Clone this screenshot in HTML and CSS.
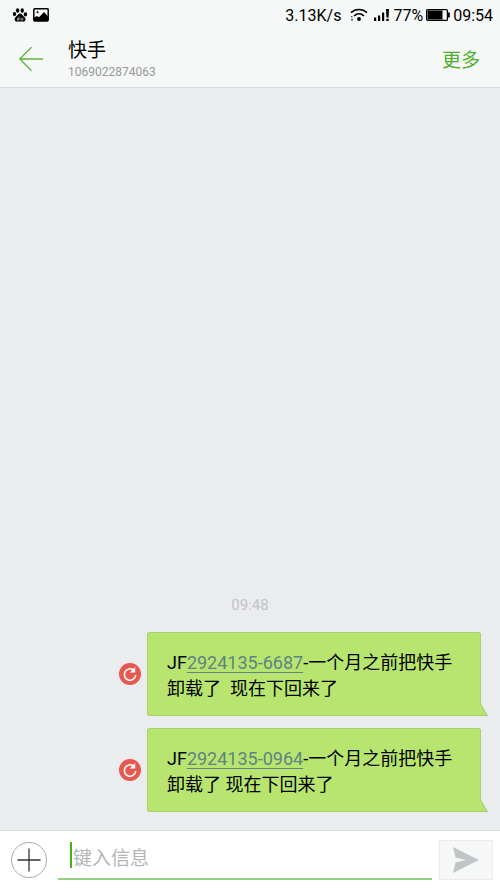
FILE: index.html
```html
<!DOCTYPE html>
<html lang="zh-CN">
<head>
<meta charset="utf-8">
<meta name="viewport" content="width=device-width, initial-scale=1">
<title>快手</title>
<link rel="stylesheet" href="styles.css">
</head>
<body>
<div class="status">
  <div class="status-left">
    <svg width="16" height="14" viewBox="0 0 16 14" aria-hidden="true">
      <ellipse cx="5.6" cy="2.5" rx="1.7" ry="2.3"/>
      <ellipse cx="10.2" cy="2.6" rx="1.7" ry="2.3"/>
      <ellipse cx="2.5" cy="6.1" rx="1.7" ry="2.1"/>
      <ellipse cx="13.4" cy="6.4" rx="1.7" ry="2.1"/>
      <path d="M8 5.6c1.700 0 2.300 1.600 3.500 2.700 1.300 1.200 2.300 2 2 3.500-.3 1.500-1.600 2-3 1.800-1.700-.2-3.300-.2-5 0-1.400.2-2.600-.3-2.900-1.800-.3-1.500.700-2.300 1.900-3.500C5.700 7.200 6.300 5.600 8 5.600z"/>
      <path d="M7 8.500v3.500H5.500v-1.500H7M9 9.700V12h1.800V9.700" fill="none" stroke="#f5f8f6" stroke-width=".6"/>
    </svg>
    <svg width="16" height="14" viewBox="0 0 16 14" aria-hidden="true">
      <rect x=".8" y=".8" width="14.400" height="12.200" rx="1" fill="none" stroke="#000" stroke-width="1.500"/>
      <circle cx="4.500" cy="4.300" r="1"/>
      <path d="M1 12V9.500l3-1.500 2 1.200L11 4l4 4.500V13H1z"/>
    </svg>
  </div>
  <div class="status-right">
    <span class="speed">3.13K/s</span>
    <svg class="wifi" width="18" height="14" viewBox="0 0 18 14" aria-hidden="true">
      <g fill="none" stroke="#000" stroke-width="1.600">
        <path d="M1 4.700c4.500-4.300 11.500-4.300 16 0"/>
        <path d="M4 8c3-2.800 7-2.800 10 0"/>
      </g>
      <circle cx="9" cy="11" r="1.900"/>
      <path d="M1 8h1.500v1.500H1zM1 11h2v1.500H1z" fill="#555"/>
    </svg>
    <svg class="signal" width="16" height="12" viewBox="0 0 16 12" aria-hidden="true">
      <path d="M0 8.500h2.200V12H0zM4 6.500h2.200V12H4zM8 3.500h2.200V12H8zM12 0h3l-.4 8.500h-2.200zM12.300 9.700h2.400V12h-2.400z"/>
    </svg>
    <span>77%</span>
    <svg class="battery" width="24" height="12" viewBox="0 0 24 12" aria-hidden="true">
      <rect x=".6" y=".6" width="20.800" height="10.800" rx="1" fill="none" stroke="#000" stroke-width="1.200"/>
      <path d="M1.500 1.500h15v9h-15zM22 3.500h1.800v5H22z"/>
    </svg>
    <span>09:54</span>
  </div>
</div>
<header class="header">
  <button class="back" type="button" aria-label="返回">
    <svg width="26" height="26" viewBox="0 0 26 26" fill="none" stroke="#62b344" stroke-width="1.300" aria-hidden="true"><path d="M25 13H2M13.500 1.300L1.800 13l11.700 11.700"/></svg>
  </button>
  <div class="contact">
    <h1>快手</h1>
    <p>1069022874063</p>
  </div>
  <button class="more" type="button">更多</button>
</header>
<main class="thread">
  <time class="stamp">09:48</time>
  <div class="message">
    <button class="retry" type="button" aria-label="重新发送">
      <svg width="22" height="22" viewBox="0 0 22 22" aria-hidden="true"><circle cx="11" cy="11" r="11" fill="#e6574f"/><path d="M14.500 7A5.700 5.700 0 1 0 16.700 12" fill="none" stroke="#fff" stroke-width="1.600"/><path d="M16.200 4v5.500h-5.500z" fill="#fff"/></svg>
    </button>
    <div class="bubble">JF<a href="tel:29241356687">2924135-6687</a>-一个月之前把快手卸载了&nbsp; 现在下回来了
      <svg class="tail" width="9" height="13" viewBox="0 0 9 13" aria-hidden="true"><path d="M0 0h1l7.500 12.500H0z" fill="#b7e56f"/><path d="M1 0l7.300 12.500H0" fill="none" stroke="#a5cc6c"/></svg>
    </div>
  </div>
  <div class="message">
    <button class="retry" type="button" aria-label="重新发送">
      <svg width="22" height="22" viewBox="0 0 22 22" aria-hidden="true"><circle cx="11" cy="11" r="11" fill="#e6574f"/><path d="M14.500 7A5.700 5.700 0 1 0 16.700 12" fill="none" stroke="#fff" stroke-width="1.600"/><path d="M16.200 4v5.500h-5.500z" fill="#fff"/></svg>
    </button>
    <div class="bubble">JF<a href="tel:29241350964">2924135-0964</a>-一个月之前把快手卸载了 现在下回来了
      <svg class="tail" width="9" height="13" viewBox="0 0 9 13" aria-hidden="true"><path d="M0 0h1l7.500 12.500H0z" fill="#b7e56f"/><path d="M1 0l7.300 12.500H0" fill="none" stroke="#a5cc6c"/></svg>
    </div>
  </div>
</main>
<form class="composer">
  <button class="attach" type="button" aria-label="添加附件">
    <svg width="36" height="36" viewBox="0 0 36 36" fill="none" aria-hidden="true"><circle cx="18" cy="18" r="17.500" stroke="#aaa"/><path d="M18 6.500v23M6.500 18h23" stroke="#333" stroke-width="1.300"/></svg>
  </button>
  <div class="field">
    <span class="caret"></span>
    <input type="text" placeholder="键入信息" aria-label="键入信息">
  </div>
  <button class="send" type="button" aria-label="发送">
    <svg width="28" height="28" viewBox="0 0 28 28" aria-hidden="true"><path d="M1 1l26 13L1 27l2.500-10.500L14 14 3.500 11.500z" fill="#c3c4c8"/></svg>
  </button>
</form>
</body>
</html>
```
FILE: styles.css
```css
* {
  box-sizing: border-box;
}

body {
  margin: 0;
  min-height: 100vh;
  display: flex;
  flex-direction: column;
  background: #ebecee;
  color: #000;
  font-family: Roboto, "Noto Sans CJK SC", sans-serif;
}

button {
  padding: 0;
  border: 0;
  background: none;
  font: inherit;
}

svg {
  display: block;
  flex: none;
}

.status {
  display: flex;
  justify-content: space-between;
  align-items: center;
  height: 30px;
  padding: 0 7px 0 12px;
  background: #f5f8f6;
  font-size: 16px;
}

.status-left,
.status-right {
  display: flex;
  align-items: center;
}

.status-left {
  gap: 5px;
}

.status-right {
  gap: 3px;
}

.speed {
  margin-right: 6px;
}

.wifi {
  margin-right: 3px;
}

.header {
  display: flex;
  align-items: center;
  height: 58px;
  padding: 0 20px 0 18px;
  background: #f5f8f6;
  border-bottom: 1px solid #d8dbdc;
}

.contact {
  flex: 1;
  margin-left: 24px;
}

.contact h1 {
  margin: 0;
  font-size: 19px;
  font-weight: 400;
  line-height: 26px;
}

.contact p {
  margin: 0;
  color: #999;
  font-size: 12px;
  line-height: 16px;
}

.more {
  color: #4fae2c;
  font-size: 19px;
}

.thread {
  flex: 1;
  display: flex;
  flex-direction: column;
  justify-content: flex-end;
  gap: 12px;
  padding: 12px 19px 18px;
}

.stamp {
  align-self: center;
  margin-bottom: 4px;
  color: #c2c3c6;
  font-size: 15px;
  line-height: 22px;
}

.message {
  display: flex;
  justify-content: flex-end;
  align-items: center;
  gap: 6px;
}

.bubble {
  position: relative;
  max-width: calc(100% - 128px);
  padding: 17px 19px 13px;
  background: #b7e56f;
  border: 1px solid #a9d26c;
  border-radius: 2px;
  font-size: 18px;
  line-height: 26px;
}

.bubble a {
  color: #5f8481;
  text-underline-offset: 3px;
}

.tail {
  position: absolute;
  right: -8px;
  bottom: -1px;
}

.composer {
  display: flex;
  align-items: center;
  gap: 11px;
  height: 59px;
  padding: 0 7px 0 11px;
  background: #fff;
  border-top: 1px solid #d8dbdc;
}

.field {
  flex: 1;
  align-self: flex-start;
  display: flex;
  align-items: center;
  gap: 1px;
  height: 49px;
  padding: 0 12px;
  border-bottom: 2px solid #91cf83;
}

.caret {
  width: 2px;
  height: 26px;
  background: #46ae20;
}

.field input {
  flex: 1;
  align-self: flex-end;
  min-width: 0;
  height: 34px;
  padding: 0 0 6px;
  border: 0;
  outline: 0;
  background: none;
  font: inherit;
  font-size: 19px;
}

.field input::placeholder {
  color: #b5b5b5;
}

.send {
  display: grid;
  place-items: center;
  width: 54px;
  height: 40px;
  margin-left: -4px;
  background: #f5f8f6;
  border: 1px solid #ececee;
}
```
